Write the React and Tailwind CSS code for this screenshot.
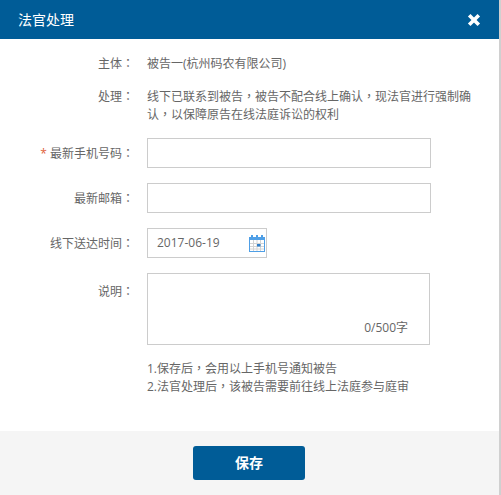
const BASE = "font-['Open_Sans','Noto_Sans_CJK_SC',sans-serif]";

function P({ children }) {
  return <span className="font-['Noto_Sans_CJK_TC'] leading-none">{children}</span>;
}

function Row({ label, star, children, cls = "" }) {
  return (
    <div className={`flex ${cls}`}>
      <div className="w-[134px] shrink-0 text-right whitespace-nowrap">
        {star && <span className="text-[#e0603c] mr-[3px] leading-none">*</span>}
        {label}
        {label && <P>：</P>}
      </div>
      <div className="ml-[13px]">{children}</div>
    </div>
  );
}

function Field() {
  return <div className="w-[284px] h-[30px] border border-[#cccccc] bg-white" />;
}

function CalendarIcon() {
  return (
    <svg width="16" height="17" viewBox="0 0 16 17" className="block">
      <rect x="0.5" y="2.5" width="15" height="14" fill="#ffffff" stroke="#4f9fe6" />
      <rect x="0" y="2" width="16" height="3" fill="#4f9fe6" />
      <rect x="2" y="0" width="2" height="3" fill="#4f9fe6" />
      <rect x="7" y="0" width="2" height="3" fill="#4f9fe6" />
      <rect x="12" y="0" width="2" height="3" fill="#4f9fe6" />
      <path d="M1 8.5H15M1 11.5H15M1 14H15M4.5 5V16M8 5V16M11.5 5V16" stroke="#d4d4d4" strokeWidth="1" fill="none" />
      <rect x="8" y="9" width="3.5" height="2.5" fill="#2f7fc9" />
    </svg>
  );
}

export default function App() {
  return (
    <div className={`w-[501px] h-[495px] bg-[#d0d0d0] ${BASE} text-[12px] leading-[18px] text-[#666666]`}>
      <div className="w-[499px] h-[495px] bg-white flex flex-col">
        <div className="h-[39px] shrink-0 bg-[#005c97] flex items-center justify-between pl-[18px] pr-[18px] text-white">
          <span className="text-[14px]">法官处理</span>
          <svg width="14" height="14" viewBox="0 0 14 14">
            <path d="M2.2 2.2L11.8 11.8M11.8 2.2L2.2 11.8" stroke="#ffffff" strokeWidth="3.6" fill="none" />
          </svg>
        </div>
        <div className="flex-1 pt-[16px]">
          <Row label="主体">被告一(杭州码农有限公司)</Row>
          <Row label="处理" cls="mt-[15px]">
            <div className="whitespace-nowrap">线下已联系到被告<P>，</P>被告不配合线上确认<P>，</P>现法官进行强制确</div>
            <div className="whitespace-nowrap">认<P>，</P>以保障原告在线法庭诉讼的权利</div>
          </Row>
          <Row label="最新手机号码" star cls="mt-[14px] h-[30px] leading-[32px]"><Field /></Row>
          <Row label="最新邮箱" cls="mt-[15px] h-[30px] leading-[32px]"><Field /></Row>
          <Row label="线下送达时间" cls="mt-[15px] h-[30px] leading-[32px]">
            <div className="w-[120px] h-[30px] border border-[#cccccc] flex items-center justify-between pl-[9px] pr-[1px] leading-[18px]">
              <span>2017-06-19</span>
              <CalendarIcon />
            </div>
          </Row>
          <Row label="说明" cls="mt-[15px] leading-[38px]">
            <div className="w-[283px] h-[72px] border border-[#cccccc] flex items-end justify-end pr-[21px] pb-[7px] leading-[18px]">0/500字</div>
          </Row>
          <Row label="" cls="mt-[15px]">
            <div>1.保存后<P>，</P>会用以上手机号通知被告</div>
            <div>2.法官处理后<P>，</P>该被告需要前往线上法庭参与庭审</div>
          </Row>
        </div>
        <div className="h-[64px] shrink-0 bg-[#f5f5f5] flex justify-center pt-[15px] pr-[1px]">
          <button className="w-[112px] h-[34px] rounded-[3px] bg-[#005c97] text-white text-[14px] font-bold">保存</button>
        </div>
      </div>
    </div>
  );
}
